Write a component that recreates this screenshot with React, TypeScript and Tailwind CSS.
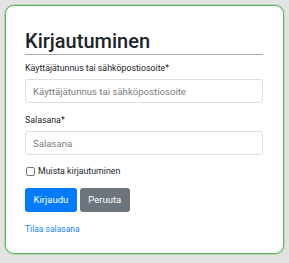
export default function App() {
    return (
        <div
            className="w-[289px] h-[263px] bg-[#e3e3e3] pt-[5px] pl-[5px]"
            style={{ fontFamily: 'Roboto, "Open Sans", sans-serif' }}
        >
            <div
                className="w-[279px] h-[249px] bg-white rounded-[9px]
                    border border-[#5cb85c] shadow-[0_0_0_1px_rgba(92,184,92,0.35)]
                    pl-[19px] pr-[20px] pt-[23px]"
            >
                <h2 className="text-[20px] leading-[24px] font-medium text-[#212529]">
                    Kirjautuminen
                </h2>
                <hr className="mt-[1px] border-t border-[#a8a8a8]" />

                <label className="block mt-[7px] text-[8.8px] leading-[12px] text-[#212529]">
                    Käyttäjätunnus tai sähköpostiosoite*
                </label>
                <input
                    className="mt-[5px] w-full h-[24px] rounded-[3px] border border-[#dedede]
                        px-[7px] text-[9.6px] text-[#333] placeholder:text-[#7d7d7d] outline-none"
                    placeholder="Käyttäjätunnus tai sähköpostiosoite"
                />

                <label className="block mt-[11px] text-[8.8px] leading-[12px] text-[#212529]">
                    Salasana*
                </label>
                <input
                    type="password"
                    className="mt-[5px] w-full h-[24px] rounded-[3px] border border-[#dedede]
                        px-[7px] text-[9.6px] text-[#333] placeholder:text-[#7d7d7d] outline-none"
                    placeholder="Salasana"
                />

                <label className="mt-[10px] flex items-center gap-[3px] text-[8.8px] leading-[12px] text-[#212529]">
                    <span className="ml-[1px] w-[9px] h-[9px] rounded-[2px] border border-[#767676] bg-white" />
                    Muista kirjautuminen
                </label>

                <div className="mt-[11px] flex gap-[3px]">
                    <button className="h-[24px] px-[8.5px] rounded-[3px] bg-[#007bff] text-white text-[9.5px]">
                        Kirjaudu
                    </button>
                    <button className="h-[24px] px-[8.5px] rounded-[3px] bg-[#6c757d] text-white text-[9.5px]">
                        Peruuta
                    </button>
                </div>

                <a className="block mt-[11px] text-[8.5px] leading-[12px] text-[#1a86ff]">
                    Tilaa salasana
                </a>
            </div>
        </div>
    );
}
